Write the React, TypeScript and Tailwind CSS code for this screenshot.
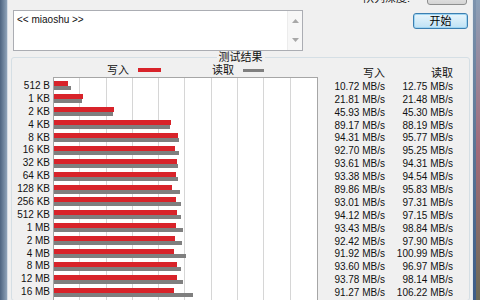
import React from "react";

const rows = [
  { label: "512 B", w: 10.72, r: 12.75 },
  { label: "1 KB", w: 21.81, r: 21.48 },
  { label: "2 KB", w: 45.93, r: 45.3 },
  { label: "4 KB", w: 89.17, r: 88.19 },
  { label: "8 KB", w: 94.31, r: 95.77 },
  { label: "16 KB", w: 92.7, r: 95.25 },
  { label: "32 KB", w: 93.61, r: 94.31 },
  { label: "64 KB", w: 93.38, r: 94.54 },
  { label: "128 KB", w: 89.86, r: 95.83 },
  { label: "256 KB", w: 93.01, r: 97.31 },
  { label: "512 KB", w: 94.12, r: 97.15 },
  { label: "1 MB", w: 93.43, r: 98.84 },
  { label: "2 MB", w: 92.42, r: 97.9 },
  { label: "4 MB", w: 91.92, r: 100.99 },
  { label: "8 MB", w: 93.6, r: 96.97 },
  { label: "12 MB", w: 93.78, r: 98.14 },
  { label: "16 MB", w: 91.27, r: 106.22 },
];

// 200 MB/s full scale over ~263px
const SCALE = 1.31;

const fmt = (v: number) => v.toFixed(2) + " MB/s";

export default function App() {
  return (
    <div className="w-[480px] h-[300px] overflow-hidden flex bg-[#f0f0f0] font-['Liberation_Sans','Noto_Sans_CJK_SC',sans-serif] text-[10px] leading-none text-[#111]">
      {/* window frame left */}
      <div className="w-[7px] bg-gradient-to-r from-[#4d6480] to-[#8fa3b9]" />
      <div className="w-[1px] bg-[#d3dbe4]" />

      <div className="flex-1 flex flex-col">
        {/* top area */}
        <div className="flex h-[57px] shrink-0">
          <div className="ml-[5px] mt-[10px] w-[290px] h-[41px] border border-[#abadb3] bg-white flex">
            <div className="flex-1 pl-[3px] pt-[4px]">&lt;&lt; miaoshu &gt;&gt;</div>
            <div className="w-[15px] bg-[#f7f7f7] border-l border-[#ececec] flex flex-col justify-between items-center py-[8px]">
              <svg width="7" height="4" viewBox="0 0 7 4">
                <path d="M3.5 0 L7 4 L0 4 Z" fill="#a8a8a8" />
              </svg>
              <svg width="7" height="4" viewBox="0 0 7 4">
                <path d="M0 0 L7 0 L3.5 4 Z" fill="#a8a8a8" />
              </svg>
            </div>
          </div>
          <div className="flex-1 flex flex-col items-end pr-[4px]">
            <div className="h-[5px] flex items-end gap-[17px] mr-[1px] overflow-hidden">
              <span className="text-[11px] leading-[12px] pb-[1px]">队列深度:</span>
              <div className="w-[40px] h-[16px] shrink-0 border border-[#8e8f8f] rounded-[3px] bg-gradient-to-b from-[#f2f2f2] to-[#d4d4d4]" />
            </div>
            <button className="mt-[8px] w-[55px] h-[16px] border border-[#3c7fb1] rounded-[3px] bg-gradient-to-b from-[#e8f5fc] to-[#bfe2f5] shadow-[inset_0_0_0_1px_#9fd5f2] text-[11px] leading-none text-black">
              开始
            </button>
          </div>
        </div>

        {/* group box */}
        <div className="relative ml-[3px] mr-[2px] flex-1 border border-[#d5dfe5] rounded-[3px] flex">
          <div className="absolute left-1/2 -translate-x-1/2 -top-[7px] px-[2px] bg-[#f0f0f0] text-[11px] leading-[12px]">
            测试结果
          </div>

          <div className="w-[306px] flex flex-col">
            {/* legend */}
            <div className="h-[19px] shrink-0 flex pt-[6px] pl-[95px]">
              <div className="flex items-center h-[12px] text-[11px]">
                <span>写入</span>
                <div className="ml-[9px] w-[23px] h-[4px] bg-[#d8232a]" />
              </div>
              <div className="ml-[51px] flex items-center h-[12px] text-[11px]">
                <span>读取</span>
                <div className="ml-[9px] w-[21px] h-[3px] bg-[#7f7f7f]" />
              </div>
            </div>

            <div className="flex-1 flex">
              <div className="w-[41px] pr-[3px] pt-[2.5px] flex flex-col items-end">
                {rows.map((r) => (
                  <div key={r.label} className="h-[12.9px] flex items-center whitespace-nowrap">
                    {r.label}
                  </div>
                ))}
              </div>
              <div className="relative w-[265px] border-l border-t border-r border-[#a6a6a6] bg-white pt-[1.5px]">
                <div className="absolute inset-0 grid grid-cols-10">
                  {Array.from({ length: 10 }).map((_, i) => (
                    <div key={i} className={i < 9 ? "border-r border-[#d6d6d6]" : ""} />
                  ))}
                </div>
                <div className="relative flex flex-col">
                  {rows.map((r) => (
                    <div key={r.label} className="h-[12.9px] flex flex-col justify-center">
                      <div className="h-[5px] bg-[#d8232a]" style={{ width: r.w * SCALE }} />
                      <div className="h-[4px] bg-[#7f7f7f]" style={{ width: r.r * SCALE }} />
                    </div>
                  ))}
                </div>
              </div>
            </div>
          </div>

          {/* values */}
          <div className="pt-[9.5px] flex">
            <div className="w-[67px] flex flex-col items-end">
              <div className="h-[12.9px] flex items-center text-[11px]">写入</div>
              {rows.map((r) => (
                <div key={r.label} className="h-[12.9px] flex items-center whitespace-nowrap">
                  {fmt(r.w)}
                </div>
              ))}
            </div>
            <div className="w-[68px] flex flex-col items-end">
              <div className="h-[12.9px] flex items-center text-[11px]">读取</div>
              {rows.map((r) => (
                <div key={r.label} className="h-[12.9px] flex items-center whitespace-nowrap">
                  {fmt(r.r)}
                </div>
              ))}
            </div>
          </div>
        </div>
      </div>

      {/* window frame right + desktop */}
      <div className="w-[1px] bg-[#e4e9ee]" />
      <div className="w-[3px] bg-gradient-to-b from-[#7d93ad] via-[#5a7596] to-[#3d5c88]" />
      <div className="w-[4px] bg-gradient-to-b from-[#8aa0b8] via-[#a26a7a] to-[#6b6a58]" />
    </div>
  );
}
